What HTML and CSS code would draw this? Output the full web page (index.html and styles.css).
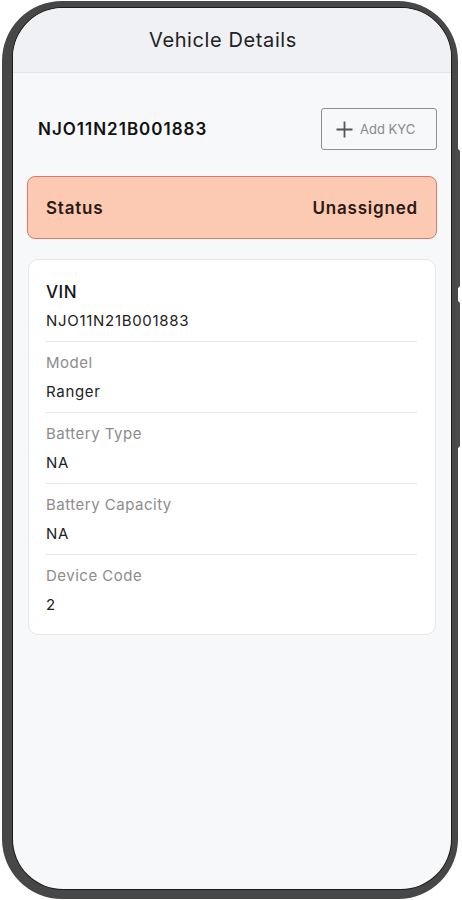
FILE: index.html
```html
<!DOCTYPE html>
<html lang="en">
<head>
    <meta charset="UTF-8">
    <meta name="viewport" content="width=device-width, initial-scale=1.0">
    <title>Vehicle Details</title>
    <link rel="stylesheet" href="styles.css">
</head>
<body>

<div class="phone">
    <div class="side-btn btn-upper"></div>
    <div class="side-btn btn-lower"></div>
    <div class="screen">
        <header class="topbar">Vehicle Details</header>

        <main class="content">
            <div class="id-row">
                <span class="vehicle-id">NJO11N21B001883</span>
                <button class="kyc-btn">
                    <svg width="19" height="19" viewBox="0 0 19 19">
                        <path d="M9.5 1.5v16M1.5 9.5h16" stroke="#555" stroke-width="1.8" fill="none"/>
                    </svg>
                    <span>Add KYC</span>
                </button>
            </div>

            <div class="status">
                <span>Status</span>
                <span>Unassigned</span>
            </div>

            <div class="card">
                <div class="item">
                    <div class="label main">VIN</div>
                    <div class="value">NJO11N21B001883</div>
                </div>
                <div class="item">
                    <div class="label">Model</div>
                    <div class="value">Ranger</div>
                </div>
                <div class="item">
                    <div class="label">Battery Type</div>
                    <div class="value">NA</div>
                </div>
                <div class="item">
                    <div class="label">Battery Capacity</div>
                    <div class="value">NA</div>
                </div>
                <div class="item">
                    <div class="label">Device Code</div>
                    <div class="value">2</div>
                </div>
            </div>
        </main>
    </div>
</div>

</body>
</html>
```

FILE: styles.css
```css
body {
    margin: 0;
    background: #fff;
    font-family: Inter, "Noto Sans", sans-serif;
    color: #1d1d1f;
}
.phone {
    position: relative;
    box-sizing: border-box;
    width: 456px;
    height: 898px;
    margin: 1px 0 0 2px;
    border-style: solid;
    border-color: #474747;
    border-width: 7px 7px 10px 11px;
    border-radius: 60px;
    background: #474747;
    box-shadow: inset 0 0 0 1px #222;
}
.side-btn {
    position: absolute;
    right: -9px;
    width: 4px;
    background: #4a4a4a;
    border-radius: 0 3px 3px 0;
}
.btn-upper {
    top: 141px;
    height: 139px;
}
.btn-lower {
    top: 293px;
    height: 147px;
}
.screen {
    height: 100%;
    border-radius: 50px;
    overflow: hidden;
    background: #f7f8fa;
    box-shadow: 0 0 0 1px #1a1a1a;
}
.topbar {
    height: 64px;
    line-height: 64px;
    padding-right: 18px;
    text-align: center;
    font-size: 20px;
    letter-spacing: 0.6px;
    background: #eff1f4;
    border-bottom: 1px solid #e3e5e8;
    color: #222;
}
.content {
    padding: 35px 14px 0;
}
.id-row {
    display: flex;
    align-items: center;
    justify-content: space-between;
    padding-left: 11px;
}
.vehicle-id {
    font-size: 17px;
    font-weight: 600;
    letter-spacing: 1px;
    color: #111;
}
.kyc-btn {
    display: flex;
    align-items: center;
    gap: 6px;
    height: 42px;
    width: 116px;
    padding: 0 0 0 13px;
    background: #f7f8fa;
    border: 1px solid #8f8f8f;
    border-radius: 3px;
    font-family: inherit;
    font-size: 13px;
    color: #8a8a8a;
}
.status {
    display: flex;
    justify-content: space-between;
    align-items: center;
    height: 61px;
    margin-top: 26px;
    padding: 0 18px;
    background: #fcc9b2;
    border: 1px solid #e0786a;
    border-radius: 8px;
    font-size: 17px;
    font-weight: 600;
    letter-spacing: 0.8px;
    color: #2a1a14;
}
.card {
    margin: 20px 1px 0;
    padding: 11px 18px 9px 17px;
    background: #fff;
    border: 1px solid #e5e6e8;
    border-radius: 10px;
}
.item {
    padding: 11px 0 10px;
    border-bottom: 1px solid #e6e7e9;
}
.item:last-child {
    border-bottom: none;
}
.label {
    font-size: 15px;
    line-height: 20px;
    letter-spacing: 0.5px;
    color: #8c8c8c;
}
.label.main {
    font-size: 17px;
    font-weight: 500;
    color: #151515;
}
.value {
    margin-top: 9px;
    font-size: 15px;
    line-height: 20px;
    letter-spacing: 0.7px;
    color: #222;
}
```
